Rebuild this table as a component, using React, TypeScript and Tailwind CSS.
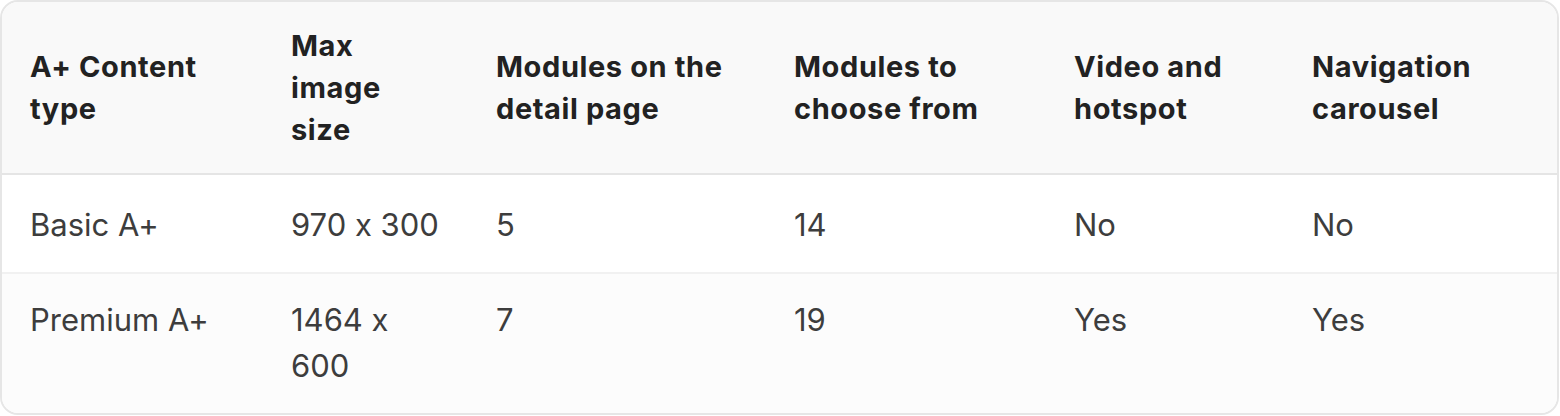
const headers = [
  ["A+ Content", "type"],
  ["Max", "image", "size"],
  ["Modules on the", "detail page"],
  ["Modules to", "choose from"],
  ["Video and", "hotspot"],
  ["Navigation", "carousel"],
];

const rows = [
  {
    bg: "bg-white border-b-2 border-[#f1f1f1]",
    pad: "pt-[27px] pb-[24px]",
    cells: [["Basic A+"], ["970 x 300"], ["5"], ["14"], ["No"], ["No"]],
  },
  {
    bg: "bg-[#fcfcfc]",
    pad: "pt-[23px] pb-[24px]",
    cells: [["Premium A+"], ["1464 x", "600"], ["7"], ["19"], ["Yes"], ["Yes"]],
  },
];

const widths = ["w-[261px]", "w-[205px]", "w-[298px]", "w-[280px]", "w-[238px]", "w-auto"];

const Lines = ({ lines }: { lines: string[] }) => (
  <>
    {lines.map((l, i) => (
      <span key={i} className="block whitespace-nowrap">
        {l}
      </span>
    ))}
  </>
);

const App = () => {
  return (
    <div className="w-[1559px] bg-white font-['Inter',_'Liberation_Sans',_sans-serif] [font-feature-settings:'calt'_0]">
      <div className="border-2 border-[#e6e6e6] rounded-[18px] overflow-hidden">
        <table className="w-full table-fixed border-collapse text-left">
          <colgroup>
            {widths.map((w, i) => (
              <col key={i} className={w} />
            ))}
          </colgroup>
          <thead>
            <tr className="bg-[#f9f9f9] border-b-2 border-[#e5e5e5]">
              {headers.map((h, i) => (
                <th
                  key={i}
                  className="px-[28px] pt-[23px] pb-[22px] align-middle text-[29px] leading-[42px] font-bold tracking-[0.6px] text-[#222222]"
                >
                  <Lines lines={h} />
                </th>
              ))}
            </tr>
          </thead>
          <tbody>
            {rows.map((r, ri) => (
              <tr key={ri} className={r.bg}>
                {r.cells.map((c, ci) => (
                  <td
                    key={ci}
                    className={`px-[28px] ${r.pad} align-top text-[31px] leading-[46px] font-normal text-[#3d3d3d]`}
                  >
                    <Lines lines={c} />
                  </td>
                ))}
              </tr>
            ))}
          </tbody>
        </table>
      </div>
    </div>
  );
};

export default App;
